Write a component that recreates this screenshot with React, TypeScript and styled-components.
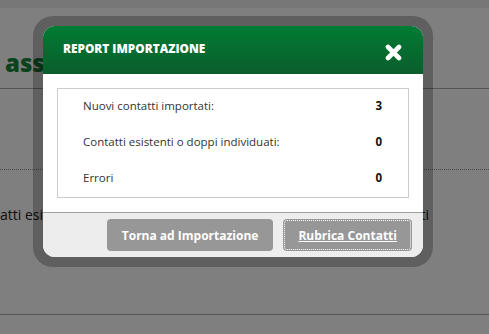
import styled, { createGlobalStyle } from 'styled-components';

const GlobalStyle = createGlobalStyle`
  html, body {
    margin: 0;
    padding: 0;
    background: #fff;
    font-family: "Open Sans", "Liberation Sans", sans-serif;
  }
  * { box-sizing: border-box; }
`;

const Page = styled.div`
  position: relative;
  width: 489px;
  height: 334px;
  overflow: hidden;
  background: #fff;
`;

const TopBar = styled.div`
  height: 8px;
  background: #eeeeee;
`;

const Heading = styled.h1`
  margin: 0;
  height: 81px;
  padding: 38px 0 0 5px;
  font-size: 24px;
  font-weight: 800;
  color: #14863a;
  white-space: nowrap;
  border-bottom: 1px solid #aaa;
`;

const Spacer = styled.div<{ $h: number; $dotted?: boolean }>`
  height: ${({ $h }) => $h}px;
  border-bottom: ${({ $dotted }) => ($dotted ? '1px dotted #999' : 'none')};
`;

const BgRow = styled.div`
  display: flex;
  justify-content: space-between;
  padding: 0 60px 0 0;
  font-size: 14px;
  line-height: 20px;
  color: #222;
  height: 110px;
  border-bottom: 1px solid #aaa;
`;

const Overlay = styled.div`
  position: absolute;
  inset: 0;
  background: rgba(0, 0, 0, 0.5);
`;

const Frame = styled.div`
  position: absolute;
  left: 33px;
  top: 16px;
  width: 400px;
  padding: 10px;
  border-radius: 20px;
  background: rgba(0, 0, 0, 0.25);
`;

const Modal = styled.div`
  border-radius: 12px;
  overflow: hidden;
  background: #fff;
`;

const Header = styled.div`
  display: flex;
  align-items: center;
  justify-content: space-between;
  height: 48px;
  padding: 0 20px 0 20px;
  background: linear-gradient(to bottom, #007c34, #0b5d2b);
`;

const Title = styled.span`
  color: #fff;
  font-size: 11.8px;
  font-weight: 800;
  text-transform: uppercase;
  margin-top: -4px;
`;

const Close = styled.button`
  display: flex;
  padding: 0;
  border: 0;
  background: none;
  margin: 4px 1px 0 0;
  cursor: pointer;
`;

const Body = styled.div`
  padding: 14px 14px 14px;
`;

const Box = styled.div`
  border: 1px solid #cccccc;
  padding: 0 26px 0 25px;
`;

const Row = styled.div`
  display: flex;
  align-items: center;
  justify-content: space-between;
  height: 36px;
  padding-bottom: 4px;
  font-size: 11.5px;
  color: #333;
`;

const Value = styled.span`
  font-weight: 700;
  color: #111;
`;

const Footer = styled.div`
  display: flex;
  justify-content: flex-end;
  gap: 10px;
  padding: 6px 11px 6px;
  background: #ededed;
  border-top: 1px solid #a0a0a0;
`;

const Btn = styled.button<{ $link?: boolean }>`
  height: 32px;
  padding: 0 15px;
  border: 0;
  border-radius: 4px;
  background: #979797;
  color: #fff;
  font-family: "Open Sans", "Liberation Sans", sans-serif;
  font-size: 12px;
  font-weight: 700;
  text-decoration: ${({ $link }) => ($link ? 'underline' : 'none')};
  outline: ${({ $link }) => ($link ? '1px dotted #fff' : 'none')};
  outline-offset: -2px;
  cursor: pointer;
`;

const rows = [
  { label: 'Nuovi contatti importati:', value: 3 },
  { label: 'Contatti esistenti o doppi individuati:', value: 0 },
  { label: 'Errori', value: 0 },
];

export default function App() {
  return (
    <>
      <GlobalStyle />
      <Page>
        <TopBar />
        <Heading>associazione contatti</Heading>
        <Spacer $h={81} $dotted />
        <Spacer $h={35} />
        <BgRow>
          <span>atti esistenti o doppi</span>
          <span>Contatti</span>
        </BgRow>
        <Overlay />
        <Frame>
          <Modal>
            <Header>
              <Title>Report importazione</Title>
              <Close aria-label="chiudi">
                <svg width="17" height="17" viewBox="0 0 17 17">
                  <path d="M3 3 L14 14 M14 3 L3 14" stroke="#fff" strokeWidth="4.6" strokeLinecap="round" />
                </svg>
              </Close>
            </Header>
            <Body>
              <Box>
                {rows.map((r) => (
                  <Row key={r.label}>
                    <span>{r.label}</span>
                    <Value>{r.value}</Value>
                  </Row>
                ))}
              </Box>
            </Body>
            <Footer>
              <Btn>Torna ad Importazione</Btn>
              <Btn $link>Rubrica Contatti</Btn>
            </Footer>
          </Modal>
        </Frame>
      </Page>
    </>
  );
}
